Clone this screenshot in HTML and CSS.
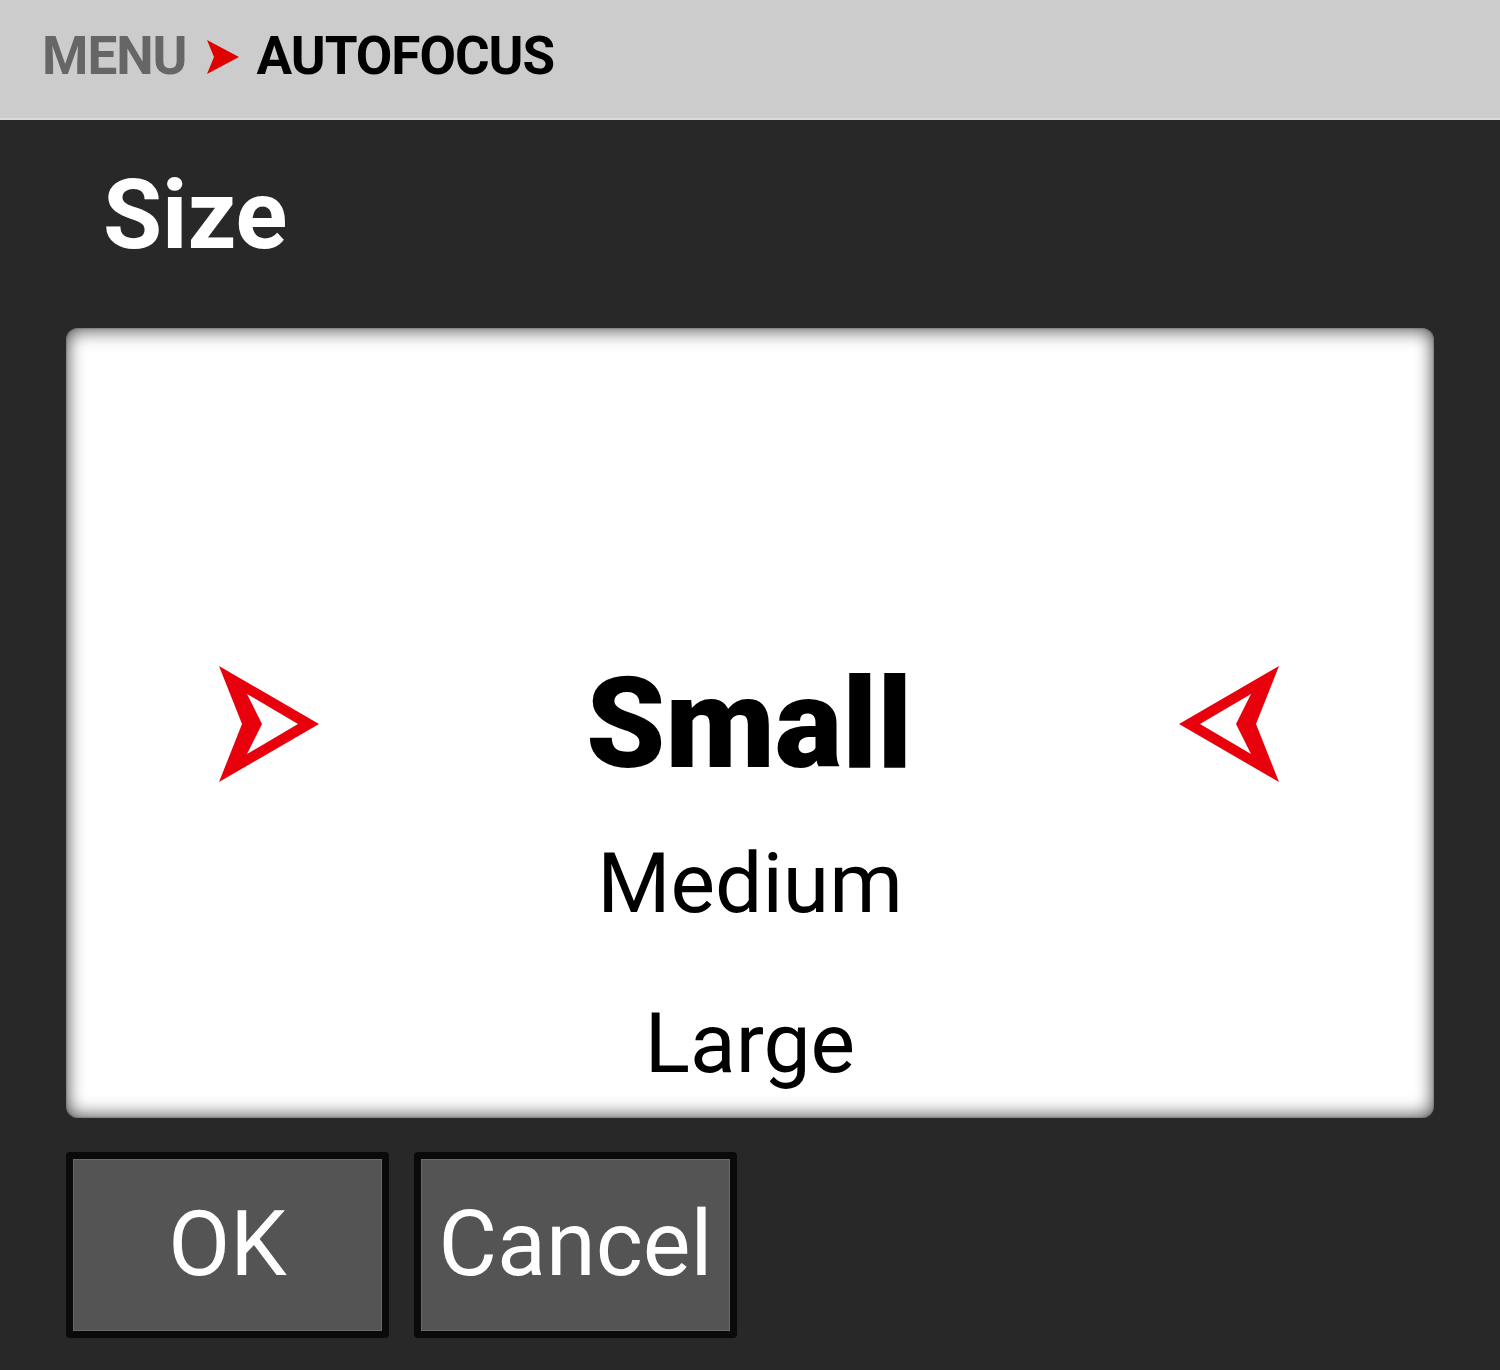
FILE: index.html
```html
<!DOCTYPE html>
<html lang="en">
<head>
    <meta charset="UTF-8">
    <title>Autofocus - Size</title>
    <link rel="stylesheet" href="styles.css">
</head>
<body>
    <header class="crumbs">
        <span class="crumb-parent">MENU</span>
        <svg class="crumb-sep" width="32" height="35" viewBox="0 0 32 35">
            <polygon points="0,0 32,17 0,34 7,17" fill="#e00000"/>
        </svg>
        <span class="crumb-current">AUTOFOCUS</span>
    </header>

    <h1 class="title">Size</h1>

    <!-- picker -->
    <section class="picker">
        <div class="option option-selected">
            <svg class="pointer" width="100" height="116" viewBox="0 0 100 116">
                <path fill-rule="evenodd" fill="#e8000c" d="M0,0 L100,58 L0,116 L23,58 Z M28,28 L43,58 L28,88 L79,58 Z"/>
            </svg>
            <span>Small</span>
            <svg class="pointer" width="100" height="116" viewBox="0 0 100 116">
                <path fill-rule="evenodd" fill="#e8000c" d="M100,0 L0,58 L100,116 L77,58 Z M72,28 L57,58 L72,88 L21,58 Z"/>
            </svg>
        </div>
        <div class="option">Medium</div>
        <div class="option">Large</div>
    </section>

    <div class="actions">
        <button class="btn">OK</button>
        <button class="btn">Cancel</button>
    </div>
</body>
</html>
```

FILE: styles.css
```css
body {
    margin: 0;
    padding: 0;
    font-family: Roboto, "Liberation Sans", sans-serif;
    background: #282828;
    color: #fff;
}
.crumbs {
    box-sizing: border-box;
    height: 120px;
    padding: 30px 42px 0;
    background: #cccccc;
    border-bottom: 2px solid #dadada;
    display: flex;
    align-items: flex-start;
    font-size: 53px;
    line-height: 53px;
    font-weight: bold;
    letter-spacing: -1px;
}
.crumb-parent {
    color: #666;
}
.crumb-sep {
    margin: 10px 18px 0 20px;
}
.crumb-current {
    color: #000;
}
.title {
    margin: 47px 0 0 103px;
    font-size: 96px;
    line-height: 96px;
    font-weight: bold;
    color: #fff;
}
.picker {
    box-sizing: border-box;
    height: 790px;
    margin: 65px 66px 0;
    padding-top: 316px;
    background: #fff;
    border-radius: 12px;
    overflow: hidden;
    box-shadow: inset 0 0 2px rgba(0,0,0,0.5), inset 0 4px 18px rgba(0,0,0,0.45), inset 0 -4px 18px rgba(0,0,0,0.45);
    color: #000;
}
.option {
    height: 160px;
    line-height: 160px;
    font-size: 84px;
    text-align: center;
}
.option-selected {
    display: grid;
    grid-template-columns: 100px 1fr 100px;
    align-items: center;
    padding: 0 155px 0 153px;
    font-size: 127px;
    font-weight: 900;
}
.pointer {
    display: block;
}
.actions {
    display: flex;
    gap: 25px;
    margin: 34px 0 0 66px;
}
.btn {
    box-sizing: border-box;
    width: 323px;
    height: 186px;
    padding: 0;
    background: #545454;
    border: 7px solid #0a0a0a;
    border-radius: 4px;
    box-shadow: inset 0 0 0 1px #6a6a6a;
    color: #fff;
    font-family: Roboto, "Liberation Sans", sans-serif;
    font-size: 90px;
    line-height: 90px;
}
```
